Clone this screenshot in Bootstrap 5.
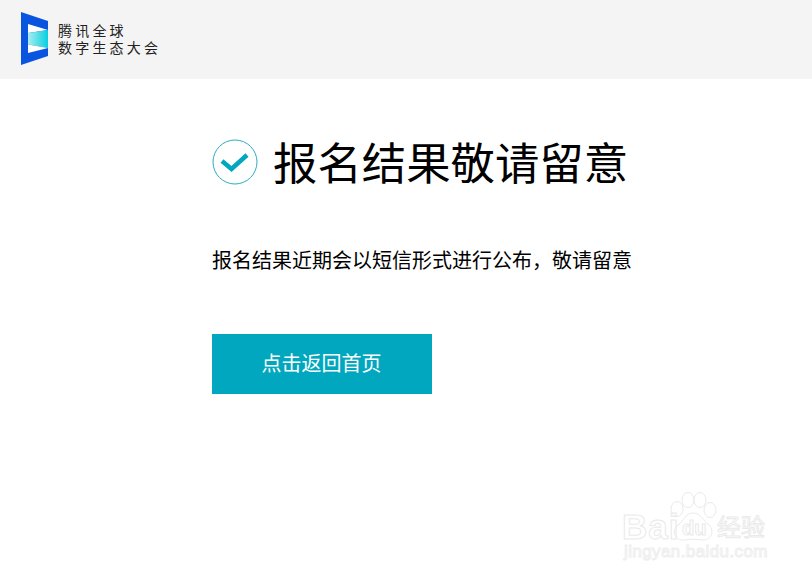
<!DOCTYPE html>
<html lang="zh-CN">
<head>
  <meta charset="UTF-8"/>
  <meta name="viewport" content="width=device-width, initial-scale=1.0"/>
  <title>报名结果</title>
  <link href="https://cdn.jsdelivr.net/npm/bootstrap@5.3.2/dist/css/bootstrap.min.css" rel="stylesheet"/>
  <style>
    html, body { height: 100%; }
    body { font-family: "Liberation Sans", "Noto Sans CJK SC", sans-serif; color: #000; overflow: hidden; position: relative; }
    .top-bar { height: 79px; background: #f4f4f4; padding-left: 21px; }
    .top-bar svg { margin-top: -2px; }
    .logo-text { font-size: 14px; line-height: 17px; letter-spacing: 3.2px; color: #222; margin-left: 10px; font-weight: 400; }
    .result-box { padding: 60px 0 0 212px; }
    .result-title { height: 46px; margin-bottom: 62px; }
    .result-title h1 { font-size: 44.4px; line-height: 50px; margin: 1px 0 0 15px; font-weight: 400; }
    .result-text { font-size: 20px; line-height: 28px; margin-bottom: 59px; }
    .back-btn { width: 220px; height: 60px; font-size: 20px; line-height: 60px; padding: 0 1px 0 0; border: 0; border-radius: 0; background: #00a7bf; color: #fff; }
    .back-btn:hover { background: #00a7bf; color: #fff; }
    .wm { position: absolute; left: 622px; top: 491px; width: 150px; height: 72px; color: transparent; }
    .wm-bai { position: absolute; left: 0; top: 18px; font-size: 35px; line-height: 36px; -webkit-text-stroke: 1px #eaeaea; font-family: "Liberation Sans", sans-serif; font-weight: 700; letter-spacing: 1px; }
    .wm-jy { position: absolute; left: 95px; top: 22px; font-size: 24px; line-height: 30px; -webkit-text-stroke: 1px #eaeaea; }
    .wm-url { position: absolute; left: 2px; top: 51px; font-size: 17px; line-height: 20px; -webkit-text-stroke: 1px #eeeeee; letter-spacing: .4px; white-space: nowrap; }
    .wm svg { position: absolute; left: 48px; top: 1px; }
    .wm-du { font: 700 20px "Liberation Sans", sans-serif; fill: none; stroke: #eaeaea; stroke-width: 1; }
  </style>
</head>
<body class="bg-white">
  <div class="top-bar d-flex align-items-center">
    <svg width="27" height="53" viewBox="0 0 27 53">
      <defs>
        <linearGradient id="logoG" x1="0" x2="1" y1="0" y2="0">
          <stop offset="0" stop-color="#a8eeee"/>
          <stop offset="1" stop-color="#05d0e0"/>
        </linearGradient>
      </defs>
      <path d="M0 0 L27 9 V44 L0 53 Z" fill="#0a55df"/>
      <path d="M7 12 L27 18 L7 21 Z" fill="#fff"/>
      <path d="M7 21 L27 18 V36 L7 32.500 Z" fill="url(#logoG)"/>
      <path d="M7 32.500 L27 36 L7 41 Z" fill="#fff"/>
    </svg>
    <div class="logo-text">腾讯全球<br/>数字生态大会</div>
  </div>

  <div class="result-box">
    <div class="result-title d-flex align-items-start">
      <svg width="46" height="46" viewBox="0 0 46 46">
        <circle cx="23" cy="23" r="22" fill="none" stroke="#29adc4" stroke-width="1"/>
        <path d="M10 22 L19.500 30 L35 16" fill="none" stroke="#00a7bf" stroke-width="4.500"/>
      </svg>
      <h1>报名结果敬请留意</h1>
    </div>
    <p class="result-text">报名结果近期会以短信形式进行公布，敬请留意</p>
    <a href="#" class="btn back-btn d-block">点击返回首页</a>
  </div>

  <div class="wm">
    <span class="wm-bai">Bai</span>
    <svg width="50" height="52" viewBox="0 0 50 52" fill="none" stroke="#eaeaea" stroke-width="1">
      <ellipse cx="7" cy="17" rx="6" ry="7.500"/>
      <ellipse cx="18" cy="8" rx="6" ry="7.500"/>
      <ellipse cx="30" cy="8" rx="6" ry="7.500"/>
      <ellipse cx="40" cy="18" rx="6" ry="7.500"/>
      <path d="M23 21 C31 21 33 29 39 33 C45 39 41 49 32 48 C26 47 20 47 14 48 C5 49 1 39 8 33 C14 29 15 21 23 21 Z"/>
      <text class="wm-du" x="12" y="43">du</text>
    </svg>
    <span class="wm-jy">经验</span>
    <span class="wm-url">jingyan.baidu.com</span>
  </div>

  <script src="https://cdn.jsdelivr.net/npm/bootstrap@5.3.2/dist/js/bootstrap.bundle.min.js"></script>
</body>
</html>
